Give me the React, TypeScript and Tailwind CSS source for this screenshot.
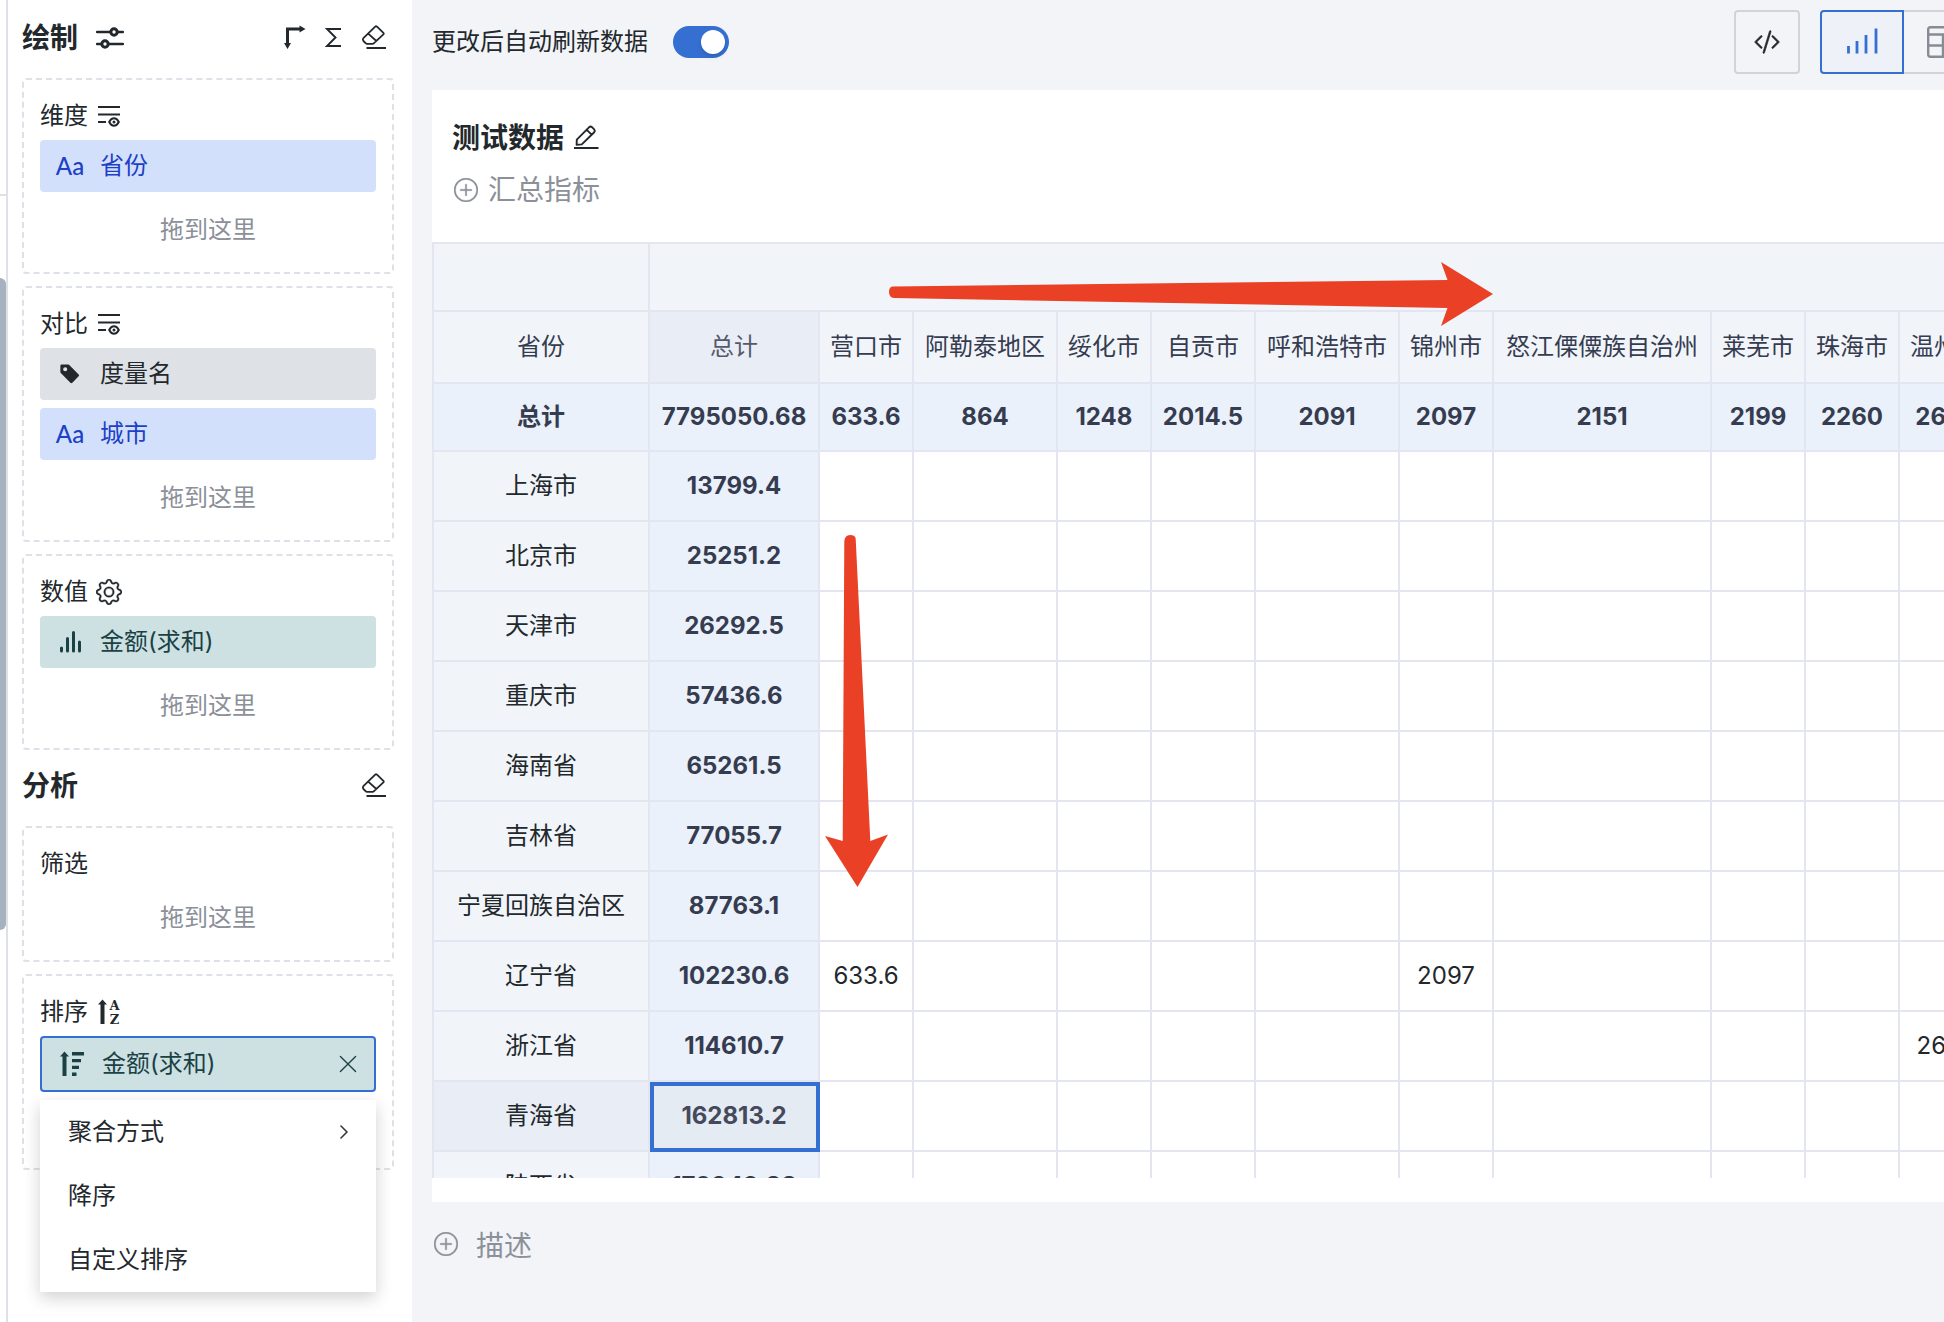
import type { ReactNode } from 'react'
import { BsChevronRight, BsCodeSlash, BsGear, BsPlusCircle, BsTagFill, BsXLg } from 'react-icons/bs'

const SlidersIcon = () => (
  <svg className="h-7 w-7" viewBox="0 0 28 28" fill="none" stroke="currentColor" strokeWidth="2.4">
    <path d="M1 8h13M22 8h5M1 20h5M13 20h14" strokeLinecap="round" />
    <circle cx="18" cy="8" r="3.2" strokeWidth="3" />
    <circle cx="9" cy="20" r="3.2" strokeWidth="3" />
  </svg>
)

const CornerArrowsIcon = () => (
  <svg className="h-7 w-7" viewBox="0 0 28 28" fill="none" stroke="currentColor" strokeWidth="3">
    <path d="M20 5H7.500V20" />
    <path d="M19.500 1.500L25.500 5L19.500 8.500ZM4 19L7.500 25L11 19Z" fill="currentColor" stroke="none" />
  </svg>
)

const SigmaIcon = () => (
  <svg className="h-7 w-7" viewBox="0 0 28 28" fill="none" stroke="currentColor" strokeWidth="1.9">
    <path d="M21 5H7L15.500 13.500L7 22H21" />
  </svg>
)

const EraserIcon = () => (
  <svg className="h-7 w-7" viewBox="0 0 28 28" fill="none" stroke="currentColor" strokeWidth="1.8" strokeLinejoin="round">
    <path d="M15.200 2.600L3.400 14.200Q2.200 15.600 3.400 17L5.600 19.200Q6.200 19.800 7 19.800H12.600Q13.400 19.800 14 19.200L23.400 10.400Q24.200 9.600 23.400 8.800L17 2.600Q16 1.800 15.200 2.600ZM8.200 9.600L16.400 17" />
    <path d="M6.500 24H26" strokeWidth="2" />
  </svg>
)

const RowsEyeIcon = () => (
  <svg className="h-6 w-6" viewBox="0 0 24 24" fill="none" stroke="currentColor" strokeWidth="2">
    <path d="M2 3H24M2 10.500H24M2 18H10" />
    <path d="M13.200 18Q15 14.300 18 14.300T22.800 18Q21 21.700 18 21.700T13.200 18Z" />
    <circle cx="18" cy="18" r="1.500" fill="currentColor" stroke="none" />
  </svg>
)

const SortLettersIcon = () => (
  <svg className="h-7 w-6" viewBox="0 0 24 28" fill="currentColor">
    <path d="M6.500 1.500L11 6.500H8.500V26H4.500V6.500H2Z" />
    <text x="18.500" y="12" fontSize="13" fontWeight="700" textAnchor="middle" fontFamily="DejaVu Serif">A</text>
    <text x="18.500" y="25.500" fontSize="13" fontWeight="700" textAnchor="middle" fontFamily="DejaVu Serif">Z</text>
  </svg>
)

const SortBarsIcon = () => (
  <svg className="h-7 w-7" viewBox="0 0 28 28" fill="currentColor">
    <path d="M6.500 1.500L11 6.500H8.500V26H4.500V6.500H2Z" />
    <path d="M14 2H26V5.500H14ZM14 9H23V12.200H14ZM14 15.800H21V19H14ZM14 22.500H18.500V26H14Z" />
  </svg>
)

const MeasureIcon = () => (
  <svg className="h-7 w-7" viewBox="0 0 28 28" fill="none" stroke="currentColor" strokeWidth="3" strokeLinecap="round">
    <path d="M5.500 20V23M11.500 10.500V23M17.500 4.500V23M23.500 14V23" />
  </svg>
)

const PencilIcon = () => (
  <svg className="h-7 w-7" viewBox="0 0 28 28" fill="none" stroke="currentColor" strokeWidth="1.900" strokeLinejoin="round">
    <path d="M4.600 20.800L4.800 15.600L17.200 3.200Q18.600 1.900 20 3.200L22.200 5.400Q23.400 6.800 22.200 8.200L9.800 20.400ZM14.800 5.800L19.600 10.600M4.600 20.600H9.600" />
    <path d="M2 24H26.500" strokeWidth="2" />
  </svg>
)

const ChartIcon = () => (
  <svg className="h-8 w-8" viewBox="0 0 32 32" fill="none" stroke="currentColor" strokeWidth="2.800">
    <path d="M2.500 20V27.500M11 15V27.500M20 9V27.500M30 2.500V27.500" />
  </svg>
)

const GridIcon = () => (
  <svg className="h-8 w-8" viewBox="0 0 32 32" fill="none" stroke="currentColor" strokeWidth="2.400">
    <rect x="1.200" y="1.200" width="29.600" height="29.600" rx="2" />
    <path d="M1 8.500H31M1 19.500H31M16 8.500V31" />
  </svg>
)

const Aa = () => <span className="font-[Lato] font-medium">Aa</span>

const tones = {
  blue: 'bg-[#d3e0fc] text-[#1c40c6]',
  gray: 'bg-[#dee2e6] text-[#22282c]',
  teal: 'bg-[#cde1e3] text-[#1b4145]',
}

function Chip({ tone, icon, label }: { tone: keyof typeof tones; icon: ReactNode; label: string }) {
  return (
    <button className={`mt-2 flex h-[52px] w-full items-center gap-4 rounded px-4 text-left ${tones[tone]}`}>
      <span className="flex w-7 shrink-0 justify-center">{icon}</span>
      {label}
    </button>
  )
}

function DropHint() {
  return <p className="mt-3 flex h-[52px] items-center justify-center text-[#8b9099]">拖到这里</p>
}

function Zone({ title, icon, children }: { title: string; icon?: ReactNode; children: ReactNode }) {
  return (
    <section className="relative mb-3 rounded border-2 border-dashed border-[#dee2e8] p-4">
      <h3 className="flex h-9 items-center gap-2 pt-1">
        {title}
        {icon}
      </h3>
      {children}
    </section>
  )
}

function IconButton({ label, children }: { label: string; children: ReactNode }) {
  return (
    <button aria-label={label} className="flex h-7 w-7 items-center justify-center">
      {children}
    </button>
  )
}

function Sidebar() {
  return (
    <aside className="w-[404px] shrink-0 bg-white pr-[18px] pl-[14px] text-[#22282c]">
      <header className="flex h-[78px] items-center justify-between pr-1.5 pb-0.5">
        <h2 className="flex items-center gap-[18px] text-[28px] font-bold">
          绘制
          <SlidersIcon />
        </h2>
        <div className="flex gap-3">
          <IconButton label="行列转置"><CornerArrowsIcon /></IconButton>
          <IconButton label="总计"><SigmaIcon /></IconButton>
          <IconButton label="清空绘制"><EraserIcon /></IconButton>
        </div>
      </header>
      <Zone title="维度" icon={<RowsEyeIcon />}>
        <Chip tone="blue" icon={<Aa />} label="省份" />
        <DropHint />
      </Zone>
      <Zone title="对比" icon={<RowsEyeIcon />}>
        <Chip tone="gray" icon={<BsTagFill className="h-[22px] w-[22px]" />} label="度量名" />
        <Chip tone="blue" icon={<Aa />} label="城市" />
        <DropHint />
      </Zone>
      <Zone title="数值" icon={<BsGear className="h-[26px] w-[26px]" strokeWidth="0.2" />}>
        <Chip tone="teal" icon={<MeasureIcon />} label="金额(求和)" />
        <DropHint />
      </Zone>
      <header className="-mt-3 flex h-[76px] items-center justify-between pr-1.5 pb-1">
        <h2 className="text-[28px] font-bold">分析</h2>
        <IconButton label="清空分析"><EraserIcon /></IconButton>
      </header>
      <Zone title="筛选">
        <DropHint />
      </Zone>
      <Zone title="排序" icon={<SortLettersIcon />}>
        <div className="mt-2 -mb-1 flex h-14 items-center gap-4 rounded border-2 border-[#346fd1] bg-[#cde1e3] pr-3.5 pl-4 text-[#1b4145]">
          <SortBarsIcon />
          <span className="flex-1">金额(求和)</span>
          <button aria-label="移除" className="flex h-6 w-6 items-center justify-center">
            <BsXLg className="h-[22px] w-[22px]" />
          </button>
        </div>
        <DropHint />
        <ul className="absolute inset-x-4 top-[124px] z-10 bg-white shadow-[0_6px_16px_rgba(0,0,0,0.18)]">
          <li>
            <button className="flex h-16 w-full items-center justify-between pr-6 pl-7">
              聚合方式
              <BsChevronRight className="h-4 w-4" strokeWidth="0.6" />
            </button>
          </li>
          <li><button className="flex h-16 w-full items-center px-7">降序</button></li>
          <li><button className="flex h-16 w-full items-center px-7">自定义排序</button></li>
        </ul>
      </Zone>
    </aside>
  )
}

const cities = [
  { name: '营口市', total: '633.6', width: 'w-[94px]' },
  { name: '阿勒泰地区', total: '864', width: 'w-[144px]' },
  { name: '绥化市', total: '1248', width: 'w-[94px]' },
  { name: '自贡市', total: '2014.5', width: 'w-[104px]' },
  { name: '呼和浩特市', total: '2091', width: 'w-[144px]' },
  { name: '锦州市', total: '2097', width: 'w-[94px]' },
  { name: '怒江傈僳族自治州', total: '2151', width: 'w-[218px]' },
  { name: '莱芜市', total: '2199', width: 'w-[94px]' },
  { name: '珠海市', total: '2260', width: 'w-[94px]' },
  { name: '温州市', total: '2629', width: 'w-[94px]' },
]

const provinces: { name: string; total: string; values?: Record<string, string>; selected?: boolean }[] = [
  { name: '上海市', total: '13799.4' },
  { name: '北京市', total: '25251.2' },
  { name: '天津市', total: '26292.5' },
  { name: '重庆市', total: '57436.6' },
  { name: '海南省', total: '65261.5' },
  { name: '吉林省', total: '77055.7' },
  { name: '宁夏回族自治区', total: '87763.1' },
  { name: '辽宁省', total: '102230.6', values: { 营口市: '633.6', 锦州市: '2097' } },
  { name: '浙江省', total: '114610.7', values: { 温州市: '2629' } },
  { name: '青海省', total: '162813.2', selected: true },
  { name: '陕西省', total: '170942.88' },
]

const cell = 'border-t-2 border-l-2 border-[#e3e6f0] p-0 text-center whitespace-nowrap'

function PivotTable() {
  return (
    <table className="w-[1560px] table-fixed border-separate border-spacing-0 text-[#363c50]">
      <colgroup>
        <col className="w-[216px]" />
        <col className="w-[170px]" />
        {cities.map((c) => <col key={c.name} className={c.width} />)}
      </colgroup>
      <thead className="bg-[#f1f5fa]">
        <tr className="h-[68px]">
          <th className={cell} />
          <th colSpan={11} className={cell} />
        </tr>
        <tr className="h-[72px]">
          <th scope="col" className={`${cell} font-normal`}>省份</th>
          <th scope="col" className={`${cell} bg-[#e9edf5] font-normal text-[#555a6a]`}>总计</th>
          {cities.map((c) => <th key={c.name} scope="col" className={`${cell} font-normal`}>{c.name}</th>)}
        </tr>
      </thead>
      <tbody>
        <tr className="h-[68px] bg-[#eaf1fa] font-bold">
          <th scope="row" className={cell}>总计</th>
          <td className={cell}>7795050.68</td>
          {cities.map((c) => <td key={c.name} className={cell}>{c.total}</td>)}
        </tr>
        {provinces.map((p) => (
          <tr key={p.name} className="h-[70px]">
            <th scope="row" className={`${cell} font-normal text-[#22282c] ${p.selected ? 'bg-[#e9edf5]' : 'bg-[#f1f5fa]'}`}>{p.name}</th>
            <td className={`${cell} relative font-bold ${p.selected ? 'bg-[#e4ebf3] text-[#444a5c]' : 'bg-[#eaf1fa]'}`}>
              {p.total}
              {p.selected && <span className="absolute inset-0 z-10 -right-0.5 -bottom-0.5 border-4 border-[#346fd1]" />}
            </td>
            {cities.map((c) => <td key={c.name} className={`${cell} text-[#22282c]`}>{p.values?.[c.name]}</td>)}
          </tr>
        ))}
      </tbody>
    </table>
  )
}

export default function App() {
  return (
    <div className="flex h-screen min-h-[900px] overflow-hidden bg-[#f2f4f8] font-[Inter,'Noto_Sans_CJK_SC',sans-serif] text-2xl leading-9">
      <div className="w-2 shrink-0 border-r-2 border-[#dee2e8] bg-white">
        <div className="h-[196px] border-b-2 border-[#dee2e8]" />
        <div className="mt-[82px] h-[652px] rounded-r-md bg-[#a6b2c0]" />
      </div>
      <Sidebar />
      <main className="flex min-w-0 flex-1 flex-col overflow-hidden pl-5 text-[#22282c]">
        <div className="flex h-[90px] shrink-0 items-start justify-between pt-2.5">
          <label className="flex h-16 items-center gap-[25px]">
            更改后自动刷新数据
            <input
              type="checkbox"
              role="switch"
              defaultChecked
              className="h-8 w-14 appearance-none rounded-full bg-[#ced4da] p-1 before:block before:h-6 before:w-6 before:rounded-full before:bg-white before:shadow-md checked:bg-[#346fd1] checked:before:ml-auto"
            />
          </label>
          <div className="-mr-11 flex h-16">
            <button aria-label="查看代码" className="mr-5 flex w-[66px] items-center justify-center rounded border-2 border-[#ced4da]">
              <BsCodeSlash className="h-[26px] w-[26px]" strokeWidth="0.4" />
            </button>
            <button aria-label="图表" className="flex w-[84px] items-center justify-center rounded-l border-2 border-[#346fd1] bg-[#eef2f8] text-[#346fd1]">
              <ChartIcon />
            </button>
            <button aria-label="表格" className="flex w-[84px] items-center justify-center rounded-r border-2 border-l-0 border-[#ced4da] pr-1 text-[#868b95]">
              <GridIcon />
            </button>
          </div>
        </div>
        <section className="flex min-h-0 flex-1 flex-col bg-white pt-[22px] pb-6">
          <div className="flex h-[52px] shrink-0 items-center gap-2 pl-5">
            <h1 className="text-[28px] font-bold">测试数据</h1>
            <IconButton label="编辑标题"><PencilIcon /></IconButton>
          </div>
          <button className="mb-[26px] flex h-[52px] shrink-0 items-center gap-2.5 self-start pl-[22px] text-[28px] text-[#8b9099]">
            <BsPlusCircle className="h-6 w-6" strokeWidth="0.2" />
            汇总指标
          </button>
          <div className="relative min-h-0 flex-1 overflow-hidden">
            <PivotTable />
            <svg className="absolute top-[18px] left-[456px] z-20 h-[68px] w-[606px]" viewBox="0 0 606 68" fill="#ea4025">
              <path d="M5 26.500L559.500 20L553 2L605 34L553 66L559.500 48L6 38Q1 37.500 1 32Q1 26.500 5 26.500Z" />
            </svg>
            <svg className="absolute top-[292px] left-[392px] z-20 h-[354px] w-[66px]" viewBox="0 0 66 354" fill="#ea4025">
              <path d="M20.300 7Q21 1 26 1Q31.500 1 31.700 5L46.300 307L64 300.500L33.500 353L1 302L18.700 307Z" />
            </svg>
          </div>
        </section>
        <button className="flex h-[120px] shrink-0 items-start gap-[18px] self-start pt-[26px] pl-0.5 text-[28px] text-[#8b9099]">
          <BsPlusCircle className="mt-1 h-6 w-6" strokeWidth="0.2" />
          描述
        </button>
      </main>
    </div>
  )
}
